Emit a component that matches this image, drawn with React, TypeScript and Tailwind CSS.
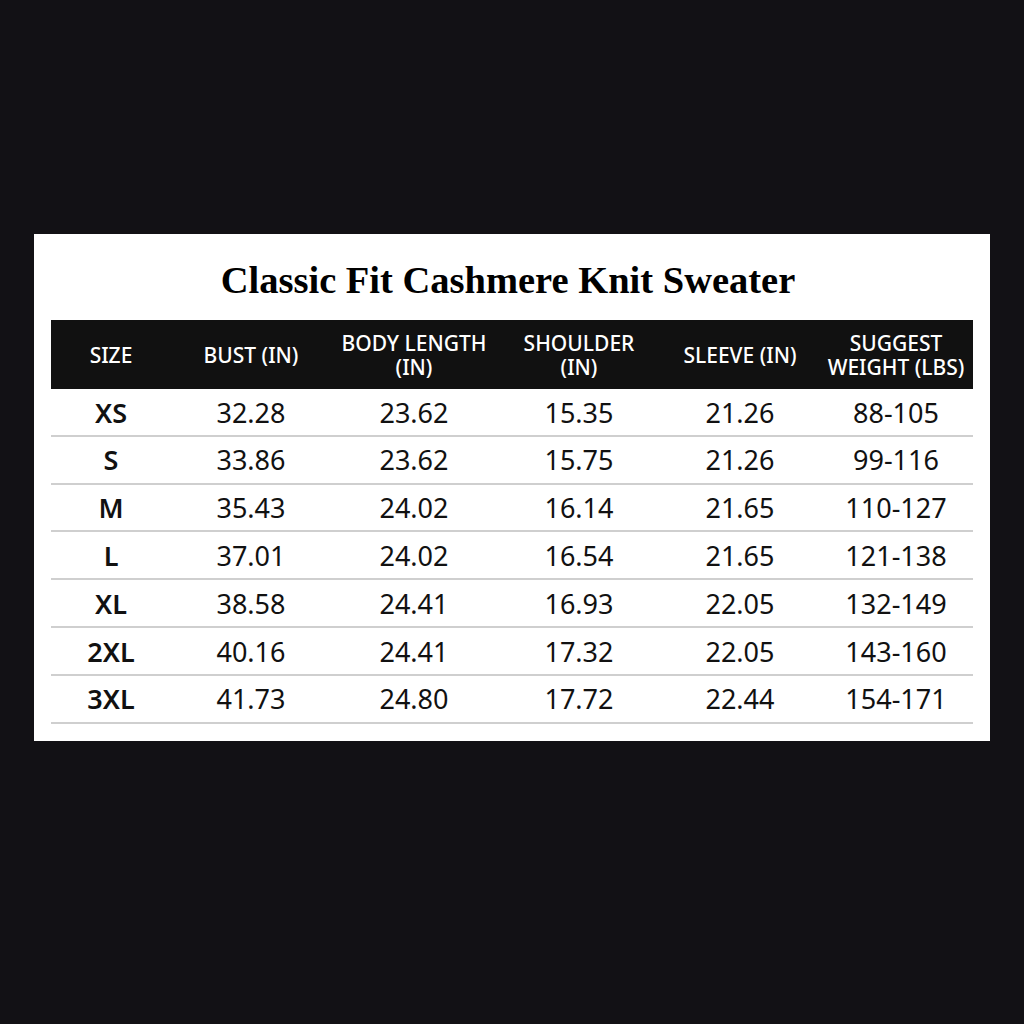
import React from 'react';

const headers: string[][] = [
  ['SIZE'],
  ['BUST (IN)'],
  ['BODY LENGTH', '(IN)'],
  ['SHOULDER', '(IN)'],
  ['SLEEVE (IN)'],
  ['SUGGEST', 'WEIGHT (LBS)'],
];

const rows: string[][] = [
  ['XS', '32.28', '23.62', '15.35', '21.26', '88-105'],
  ['S', '33.86', '23.62', '15.75', '21.26', '99-116'],
  ['M', '35.43', '24.02', '16.14', '21.65', '110-127'],
  ['L', '37.01', '24.02', '16.54', '21.65', '121-138'],
  ['XL', '38.58', '24.41', '16.93', '22.05', '132-149'],
  ['2XL', '40.16', '24.41', '17.32', '22.05', '143-160'],
  ['3XL', '41.73', '24.80', '17.72', '22.44', '154-171'],
];

const cols = 'grid grid-cols-[120px_160px_166px_164px_158px_154px]';

const App: React.FC = () => {
  return (
    <div className="min-h-screen w-full bg-[#121115] pt-[234px]" style={{ fontFamily: '"Noto Sans", "Open Sans", sans-serif' }}>
      <div className="mx-auto w-[956px] bg-white px-[17px] pt-[24px] pb-[17px]">
        <h1
          className="text-center text-[38.5px] leading-[44px] font-bold text-black pr-[8px]"
          style={{ fontFamily: '"Liberation Serif", "Times New Roman", serif' }}
        >
          Classic Fit Cashmere Knit Sweater
        </h1>

        <div className={`${cols} mt-[18px] h-[69px] bg-[#111111] text-white`}>
          {headers.map((h, i) => (
            <div key={i} className="flex flex-col items-center justify-center text-[21px] leading-[24px] font-medium">
              {h.map((line) => (
                <span key={line}>{line}</span>
              ))}
            </div>
          ))}
        </div>

        {rows.map((r) => (
          <div key={r[0]} className={`${cols} h-[47.8px] border-b-2 border-[#cfcfcf] text-[#111]`}>
            {r.map((cell, i) => (
              <div
                key={i}
                className={`flex items-center justify-center pt-[2px] text-[27px] ${i === 0 ? 'font-semibold' : 'font-normal'}`}
              >
                {cell}
              </div>
            ))}
          </div>
        ))}
      </div>
    </div>
  );
};

export default App;
